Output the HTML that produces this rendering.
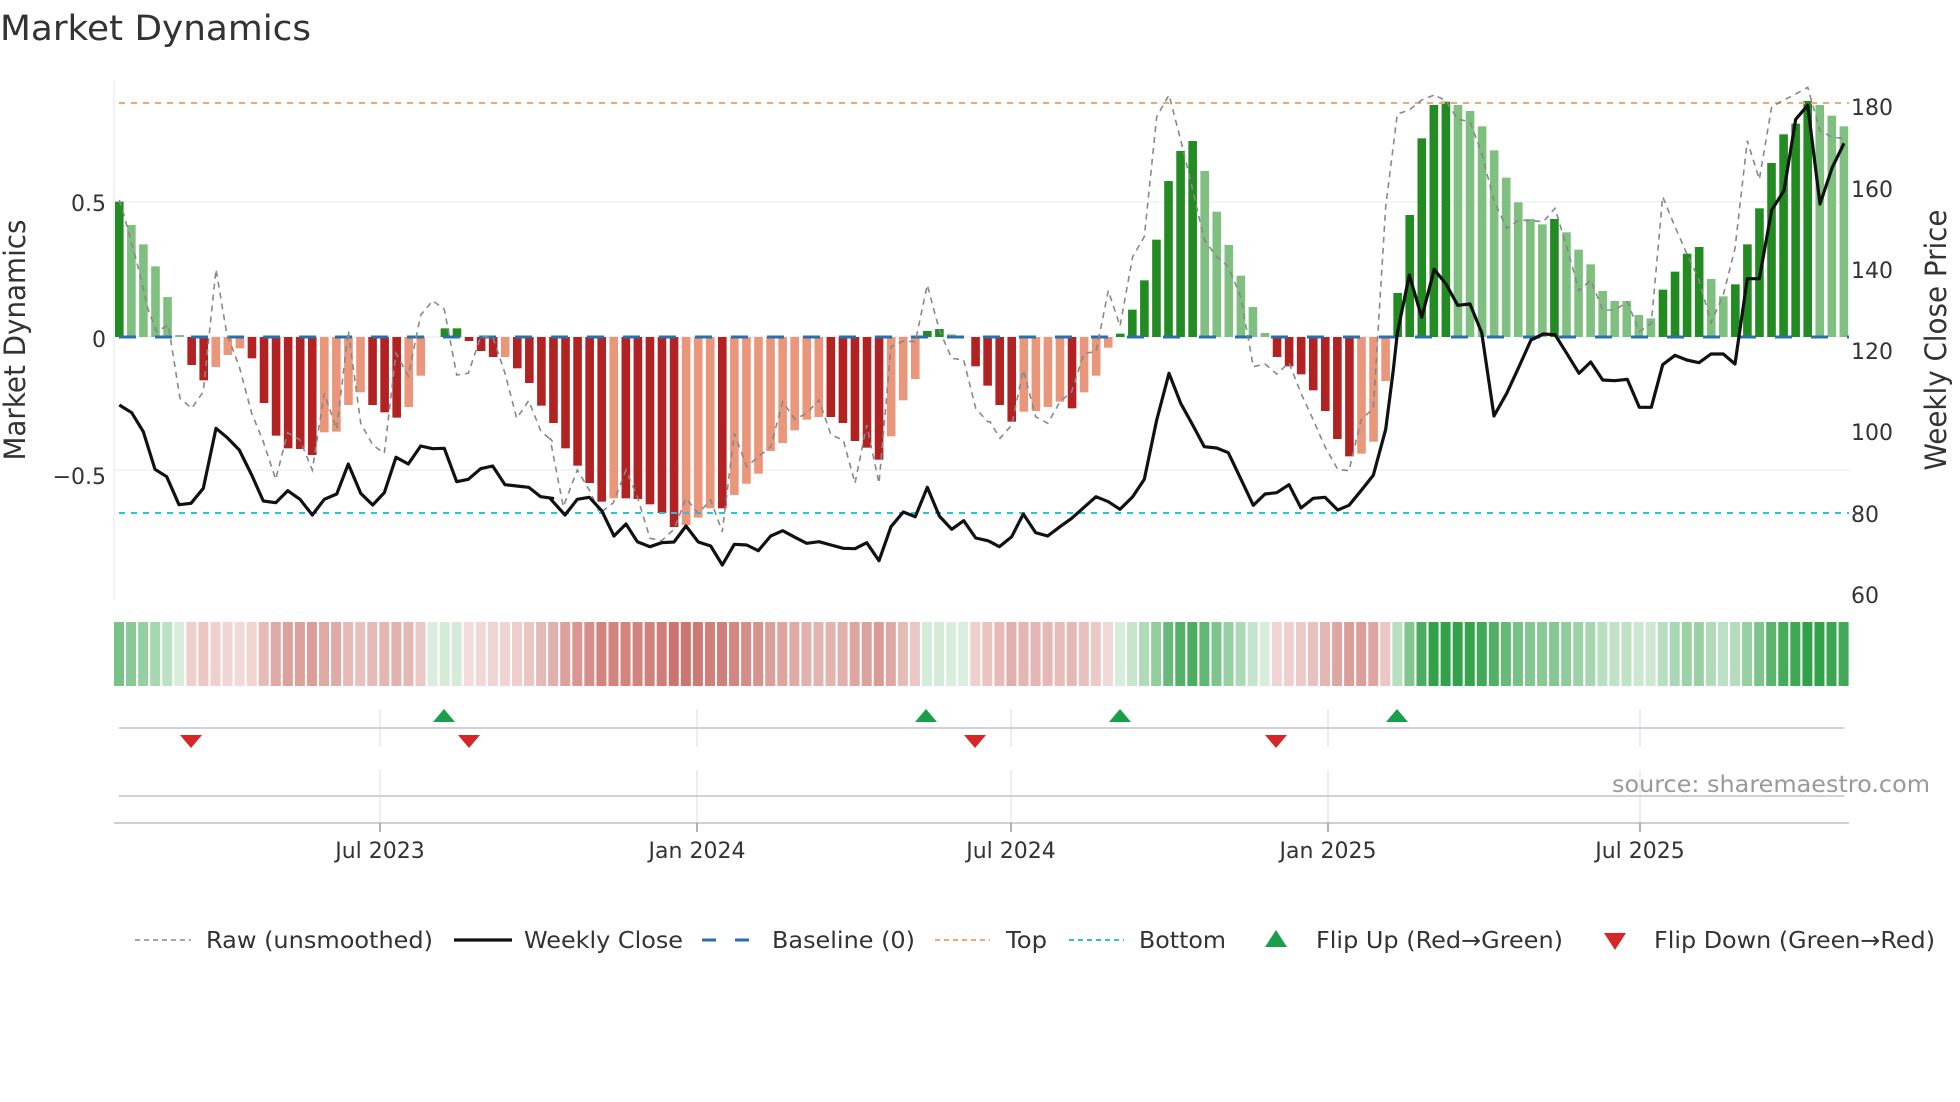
<!DOCTYPE html>
<html><head><meta charset="utf-8"><style>
html,body{margin:0;padding:0;background:#fff;}
svg{display:block;}
text{font-family:"DejaVu Sans","Liberation Sans",sans-serif;fill:#333;}
</style></head><body>
<svg id="s" xmlns="http://www.w3.org/2000/svg" width="1960" height="1102" viewBox="0 0 1960 1102">
<rect width="1960" height="1102" fill="#fff"/>
<text x="0" y="40" font-size="35" textLength="311" lengthAdjust="spacingAndGlyphs">Market Dynamics</text>
<line x1="114" y1="81" x2="114" y2="600" stroke="#eceef3" stroke-width="1.5"/>
<line x1="114" y1="202" x2="1849" y2="202" stroke="#eef0f5" stroke-width="1.5"/>
<line x1="114" y1="470" x2="1849" y2="470" stroke="#eef0f5" stroke-width="1.5"/>
<line x1="114" y1="337" x2="1849" y2="337" stroke="#eef0f5" stroke-width="1.5"/>
<g id="bars"></g>
<line x1="119" y1="103" x2="1849" y2="103" stroke="#f0a868" stroke-width="2" stroke-dasharray="6 6"/>
<line x1="119" y1="513" x2="1849" y2="513" stroke="#2fc1d3" stroke-width="2" stroke-dasharray="6 6"/>
<line x1="119" y1="337" x2="1849" y2="337" stroke="#2a6fa8" stroke-width="3" stroke-dasharray="17 19"/>
<polyline id="raw" fill="none" stroke="#888" stroke-width="1.6" stroke-dasharray="6 5"/>
<polyline id="price" fill="none" stroke="#111" stroke-width="3.2" stroke-linejoin="round"/>
<g font-size="22" text-anchor="end">
<text x="106" y="211">0.5</text>
<text x="106" y="347">0</text>
<text x="106" y="484">−0.5</text>
</g>
<g font-size="22">
<text x="1851" y="115">180</text>
<text x="1851" y="197">160</text>
<text x="1851" y="278">140</text>
<text x="1851" y="359">120</text>
<text x="1851" y="440">100</text>
<text x="1851" y="522">80</text>
<text x="1851" y="603">60</text>
</g>
<text transform="translate(25,340) rotate(-90)" font-size="29" text-anchor="middle" textLength="241" lengthAdjust="spacingAndGlyphs">Market Dynamics</text>
<text transform="translate(1946,340) rotate(-90)" font-size="29" text-anchor="middle" textLength="261" lengthAdjust="spacingAndGlyphs">Weekly Close Price</text>
<g id="strip"></g>
<g stroke="#e6e8ee" stroke-width="1.5">
<line x1="380" y1="709" x2="380" y2="747"/><line x1="697" y1="709" x2="697" y2="747"/><line x1="1011" y1="709" x2="1011" y2="747"/><line x1="1328" y1="709" x2="1328" y2="747"/><line x1="1640" y1="709" x2="1640" y2="747"/>
<line x1="380" y1="770" x2="380" y2="822"/><line x1="697" y1="770" x2="697" y2="822"/><line x1="1011" y1="770" x2="1011" y2="822"/><line x1="1328" y1="770" x2="1328" y2="822"/><line x1="1640" y1="770" x2="1640" y2="822"/>
</g>
<line x1="119" y1="728" x2="1844" y2="728" stroke="#cfd1d6" stroke-width="2"/>
<line x1="119" y1="796" x2="1844" y2="796" stroke="#cfd1d6" stroke-width="2"/>
<line x1="114" y1="823" x2="1849" y2="823" stroke="#cfd1d6" stroke-width="2"/>
<g stroke="#999" stroke-width="1.5">
<line x1="380" y1="823" x2="380" y2="832"/><line x1="697" y1="823" x2="697" y2="832"/><line x1="1011" y1="823" x2="1011" y2="832"/><line x1="1328" y1="823" x2="1328" y2="832"/><line x1="1640" y1="823" x2="1640" y2="832"/>
</g>
<g fill="#1a9e4a">
<polygon points="433,722 455,722 444,709"/><polygon points="915,722 937,722 926,709"/><polygon points="1109,722 1131,722 1120,709"/><polygon points="1386,722 1408,722 1397,709"/>
</g>
<g fill="#d62728">
<polygon points="180,735 202,735 191,748"/><polygon points="458,735 480,735 469,748"/><polygon points="964,735 986,735 975,748"/><polygon points="1265,735 1287,735 1276,748"/>
</g>
<text x="1930" y="792" font-size="23" text-anchor="end" style="fill:#999" textLength="318" lengthAdjust="spacingAndGlyphs">source: sharemaestro.com</text>
<g font-size="22" text-anchor="middle">
<text x="380" y="858">Jul 2023</text>
<text x="697" y="858">Jan 2024</text>
<text x="1011" y="858">Jul 2024</text>
<text x="1328" y="858">Jan 2025</text>
<text x="1640" y="858">Jul 2025</text>
</g>
<line x1="135" y1="940" x2="191" y2="940" stroke="#888" stroke-width="1.6" stroke-dasharray="5 4"/>
<text x="206" y="948" font-size="23" textLength="227" lengthAdjust="spacingAndGlyphs">Raw (unsmoothed)</text>
<line x1="454" y1="940" x2="512" y2="940" stroke="#111" stroke-width="3.2"/>
<text x="524" y="948" font-size="23" textLength="159" lengthAdjust="spacingAndGlyphs">Weekly Close</text>
<line x1="702" y1="940" x2="757" y2="940" stroke="#2a6fa8" stroke-width="3" stroke-dasharray="14 19"/>
<text x="772" y="948" font-size="23" textLength="143" lengthAdjust="spacingAndGlyphs">Baseline (0)</text>
<line x1="935" y1="940" x2="990" y2="940" stroke="#f0a868" stroke-width="2" stroke-dasharray="5 4"/>
<text x="1006" y="948" font-size="23" textLength="41" lengthAdjust="spacingAndGlyphs">Top</text>
<line x1="1069" y1="940" x2="1124" y2="940" stroke="#2fc1d3" stroke-width="2" stroke-dasharray="5 4"/>
<text x="1139" y="948" font-size="23" textLength="87" lengthAdjust="spacingAndGlyphs">Bottom</text>
<polygon points="1265,947 1287,947 1276,930" fill="#1a9e4a"/>
<text x="1316" y="948" font-size="23" textLength="247" lengthAdjust="spacingAndGlyphs">Flip Up (Red→Green)</text>
<polygon points="1604,933 1626,933 1615,950" fill="#d62728"/>
<text x="1654" y="948" font-size="23" textLength="281" lengthAdjust="spacingAndGlyphs">Flip Down (Green→Red)</text>
</svg>
<script>
var NS="http://www.w3.org/2000/svg";
var B="362G 432g 490g 556g 648g 762g 852R 898R 858r 822r 802r 832R 966R 1064R 1102R 1104R 1122R 1054r 1052r 972r 934r 972R 994R 1010R 978r 884r 768g 742G 742G 780R 810R 828R 828r 862R 906R 974R 1026R 1102R 1154R 1206R 1262R 1252r 1252R 1254R 1270R 1296R 1338R 1332r 1310r 1282r 1282R 1242r 1208r 1178r 1110r 1086r 1048r 1016r 1008r 1008R 1026R 1080R 1100R 1136R 1066r 958r 894r 750G 744G 760g 768g 856R 914R 972R 1022R 992r 990r 978r 962r 982R 934r 884r 800r 758G 686G 598G 476G 300G 210G 180G 270g 392g 492g 584g 678g 756g 828R 856R 880R 928R 990R 1074R 1126R 1118r 1082r 900r 636G 402G 172G 72G 62G 72g 90g 136g 208g 290g 364g 414g 430g 414G 454g 506g 550g 630g 660g 660g 702g 712g 626G 572G 518G 498G 594g 646g 610G 490G 382G 246G 160G 128G 60G 72g 104g 136g".split(" ");
var col={G:"#228b22",g:"#7fbf7f",R:"#b22222",r:"#e9967a"};
var gb=document.getElementById("bars"),gs=document.getElementById("strip");
for(var k=0;k<B.length;k++){
 var zy=parseFloat(B[k]),t=B[k].slice(-1);
 var y0=337,y=y0+(zy-768)/3,x=115+12.06*k;
 var r=document.createElementNS(NS,"rect");
 r.setAttribute("x",x);r.setAttribute("width",8.6);
 r.setAttribute("y",Math.min(y,y0));r.setAttribute("height",Math.max(Math.abs(y-y0),0.01));
 r.setAttribute("fill",col[t]);gb.appendChild(r);
 var v=(768-zy)/806,c;
 if(v>=0||(t=="g"||t=="G")){var a=0.18+0.8*Math.min(1,Math.abs(v)/0.86);c="rgba(46,160,70,"+a.toFixed(3)+")";}
 else{var a=0.18+0.62*Math.min(1,Math.abs(v)/0.72);c="rgba(190,80,72,"+a.toFixed(3)+")";}
 var s=document.createElementNS(NS,"rect");
 s.setAttribute("x",114+12.06*k);s.setAttribute("width",10);s.setAttribute("y",622);s.setAttribute("height",64);
 s.setAttribute("fill",c);gs.appendChild(s);
}
function pts(groups){var out=[];groups.forEach(function(g){var o=g[0],a=g[1];for(var i=0;i<a.length;i+=2){out.push((o+a[i]/3).toFixed(1)+","+(80+a[i+1]/3).toFixed(1));}});return out.join(" ");}
var P=[[110,[28,975,65,998,100,1055,135,1168,170,1190,207,1274,243,1270,280,1225,318,1045,352,1073,388,1110,425,1185,460,1263,497,1268,533,1232,570,1258,607,1305,643,1258,680,1242,715,1152,752,1240,788,1275,823,1238,858,1132,895,1152,932,1098,968,1106,1003,1105,1040,1205,1075,1198,1112,1166,1148,1158,1185,1214,1220,1218,1256,1222,1292,1250,1328,1255]],
[550,[0,1255,45,1305,82,1258,118,1252,155,1292,192,1368,228,1332,262,1385,300,1400,335,1388,372,1386,408,1338,445,1386,482,1398,517,1455,553,1393,590,1395,625,1412,662,1368,698,1352,735,1372,770,1390,807,1385,843,1395,880,1405,915,1406,950,1388,987,1442,1023,1340,1060,1296,1096,1310,1132,1222,1168,1308,1205,1348,1241,1322,1277,1374,1313,1382]],
[990,[0,1385,28,1400,65,1370,100,1302,137,1358,173,1368,210,1340,245,1315,282,1282,318,1250,355,1265,390,1288,428,1250,463,1198,500,1020,537,880,572,970,608,1035,643,1100,680,1104,715,1118,752,1196,790,1276,825,1242,860,1238,897,1214,933,1284,970,1255,1005,1252,1043,1290,1077,1276,1113,1232,1150,1186,1187,1048,1210,870,1222,760,1258,585,1295,712,1333,568]],
[1420,[42,568,78,612,113,676,150,672,185,758,222,1008,260,940,297,860,333,780,370,762,405,764,440,820,477,880,512,846,548,900,585,902,622,898,658,982,694,982,728,854,765,826,800,840,837,848,873,822,910,822,945,852,982,596,1018,596,1055,390,1092,332,1127,118,1163,76,1200,372,1237,262,1272,190]]];
document.getElementById("price").setAttribute("points",pts(P));
var R=[[110,[28,360,40,398,80,545,115,690,140,755,175,735,210,955,245,985,280,935,318,568,350,760,388,860,425,1000,460,1085,497,1198,533,1058,570,1080,607,1170,643,940,680,1048,715,752,752,1030,788,1095,823,1120,858,820,895,888,932,705,968,662,1003,688,1040,885,1075,880,1112,770,1148,770,1185,880,1220,1015,1256,962,1292,1052,1328,1085]],
[550,[0,1075,40,1280,82,1170,118,1230,150,1300,190,1268,228,1170,262,1250,300,1375,335,1382,372,1348,408,1255,445,1300,482,1260,517,1355,553,1060,590,1160,625,1130,662,1100,698,965,735,1018,770,1000,807,960,843,1065,880,1080,915,1210,950,1035,987,1210,1023,800,1060,783,1096,785,1132,615,1168,750,1205,835,1241,840,1277,985,1313,1025]],
[990,[0,1025,30,1075,65,1035,100,870,137,1010,173,1030,210,965,245,935,282,820,318,815,355,632,390,738,428,530,463,470,500,110,537,45,572,180,608,330,643,480,680,530,715,560,752,650,790,860,825,852,860,882,897,848,933,940,970,1020,1005,1100,1043,1168,1077,1172,1113,1020,1150,985,1187,380,1222,102,1258,90,1295,60,1333,45]],
[1420,[42,45,78,62,113,118,150,125,185,220,222,362,260,445,297,420,333,422,370,425,405,385,440,500,477,632,512,600,548,690,585,690,622,665,658,755,694,730,728,350,765,440,800,520,837,600,873,728,910,645,945,505,982,182,1018,298,1055,80,1092,60,1127,42,1163,22,1200,152,1237,172,1272,175]]];
document.getElementById("raw").setAttribute("points",pts(R));
</script>
</body></html>
